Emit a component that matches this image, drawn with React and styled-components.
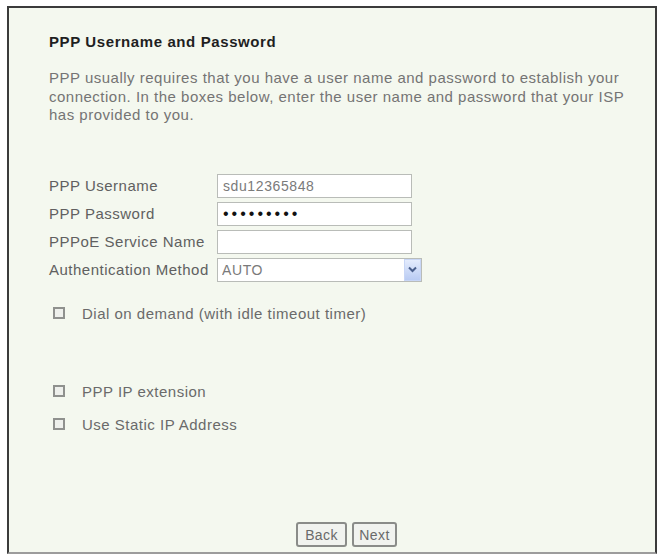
import React from 'react'
import styled, { createGlobalStyle } from 'styled-components'

const GlobalStyle = createGlobalStyle`
  body {
    margin: 0;
    background: #ffffff;
    font-family: "Liberation Sans", Arial, sans-serif;
  }
`

const fields = [
  { label: 'PPP Username', value: 'sdu12365848', type: 'text' },
  { label: 'PPP Password', value: 'password1', type: 'password' },
  { label: 'PPPoE Service Name', value: '', type: 'text' }
]

const options = [
  { label: 'Dial on demand (with idle timeout timer)', gap: 23.5 },
  { label: 'PPP IP extension', gap: 62 },
  { label: 'Use Static IP Address', gap: 17 }
]

export default function App() {
  return (
    <Page>
      <GlobalStyle />
      <Frame>
        <Title>PPP Username and Password</Title>
        <Intro>
          PPP usually requires that you have a user name and password to establish your<br />
          connection. In the boxes below, enter the user name and password that your ISP<br />
          has provided to you.
        </Intro>

        <Form>
          {fields.map(f => (
            <React.Fragment key={f.label}>
              <Label>{f.label}</Label>
              <TextField type={f.type} defaultValue={f.value} readOnly $secret={f.type === 'password'} />
            </React.Fragment>
          ))}
          <Label>Authentication Method</Label>
          <SelectWrap>
            <Select defaultValue="AUTO">
              <option>AUTO</option>
              <option>PAP</option>
              <option>CHAP</option>
            </Select>
            <ArrowButton>
              <svg width="9" height="7" viewBox="0 0 9 7">
                <path d="M1 1.5 L4.5 5 L8 1.5" fill="none" stroke="#4a5f8c" strokeWidth="2" />
              </svg>
            </ArrowButton>
          </SelectWrap>
        </Form>

        {options.map(o => (
          <CheckRow key={o.label} $gap={o.gap}>
            <CheckBox type="checkbox" />
            <CheckText>{o.label}</CheckText>
          </CheckRow>
        ))}

        <ButtonRow>
          <Button $w={51}>Back</Button>
          <Button $w={45}>Next</Button>
        </ButtonRow>
      </Frame>
    </Page>
  )
}

const Page = styled.div`
  box-sizing: border-box;
  width: 659px;
  height: 557px;
  padding: 6px 0 0 7px;
`

const Frame = styled.div`
  box-sizing: border-box;
  width: 650px;
  height: 548px;
  display: flex;
  flex-direction: column;
  padding: 26px 11px 5px 40px;
  background: #f4f8ef;
  border: 2px solid #3b3b3b;
  border-bottom-color: #9c9c9c;
  font-size: 15px;
  letter-spacing: 0.5px;
`

const Title = styled.h1`
  margin: 0;
  font-size: 15px;
  line-height: 16px;
  font-weight: bold;
  letter-spacing: 0.6px;
  color: #1f1f1f;
`

const Intro = styled.p`
  margin: 19px 0 0;
  line-height: 18.5px;
  color: #747474;
  white-space: nowrap;
`

const Form = styled.div`
  display: grid;
  grid-template-columns: 168px auto;
  row-gap: 4px;
  align-items: center;
  justify-items: start;
  margin-top: 49px;
`

const Label = styled.div`
  color: #606060;
  line-height: 18px;
`

const TextField = styled.input`
  box-sizing: border-box;
  width: 195px;
  height: 24px;
  margin: 0;
  padding: 0 5px;
  border: 1px solid #b9bcb8;
  background: #ffffff;
  font-family: inherit;
  font-size: ${({ $secret }) => ($secret ? '16px' : '14px')};
  letter-spacing: ${({ $secret }) => ($secret ? '3px' : '0.6px')};
  color: ${({ $secret }) => ($secret ? '#111' : '#7a7a7a')};
  outline: none;
`

const SelectWrap = styled.div`
  position: relative;
  width: 205px;
  height: 24px;
`

const Select = styled.select`
  box-sizing: border-box;
  width: 100%;
  height: 100%;
  margin: 0;
  padding: 0 4px;
  appearance: none;
  border: 1px solid #b9bcb8;
  border-radius: 0;
  background: #ffffff;
  font-family: inherit;
  font-size: 14px;
  letter-spacing: 0.6px;
  color: #7a7a7a;
  outline: none;
`

const ArrowButton = styled.div`
  position: absolute;
  top: 1px;
  right: 1px;
  bottom: 1px;
  width: 17px;
  display: flex;
  align-items: center;
  justify-content: center;
  box-sizing: border-box;
  border: 1px solid #c8d6f6;
  background: linear-gradient(#e4ecfd, #b9cbf3);
  pointer-events: none;
`

const CheckRow = styled.label`
  display: flex;
  align-items: center;
  height: 16px;
  margin-top: ${({ $gap }) => $gap}px;
  padding-left: 4px;
`

const CheckBox = styled.input`
  appearance: none;
  box-sizing: border-box;
  width: 12px;
  height: 12px;
  margin: 0 17px 0 0;
  border: 2px solid #8f918e;
  background: #eef0ec;
`

const CheckText = styled.span`
  color: #6a6a6a;
`

const ButtonRow = styled.div`
  display: flex;
  justify-content: center;
  gap: 5px;
  margin-top: auto;
`

const Button = styled.button`
  box-sizing: border-box;
  width: ${({ $w }) => $w}px;
  height: 25px;
  padding: 0;
  border: 2px solid #8a8c89;
  border-radius: 3px;
  background: #f1f3ef;
  font-family: inherit;
  font-size: 14px;
  letter-spacing: 0.4px;
  color: #6a6a6a;
`
